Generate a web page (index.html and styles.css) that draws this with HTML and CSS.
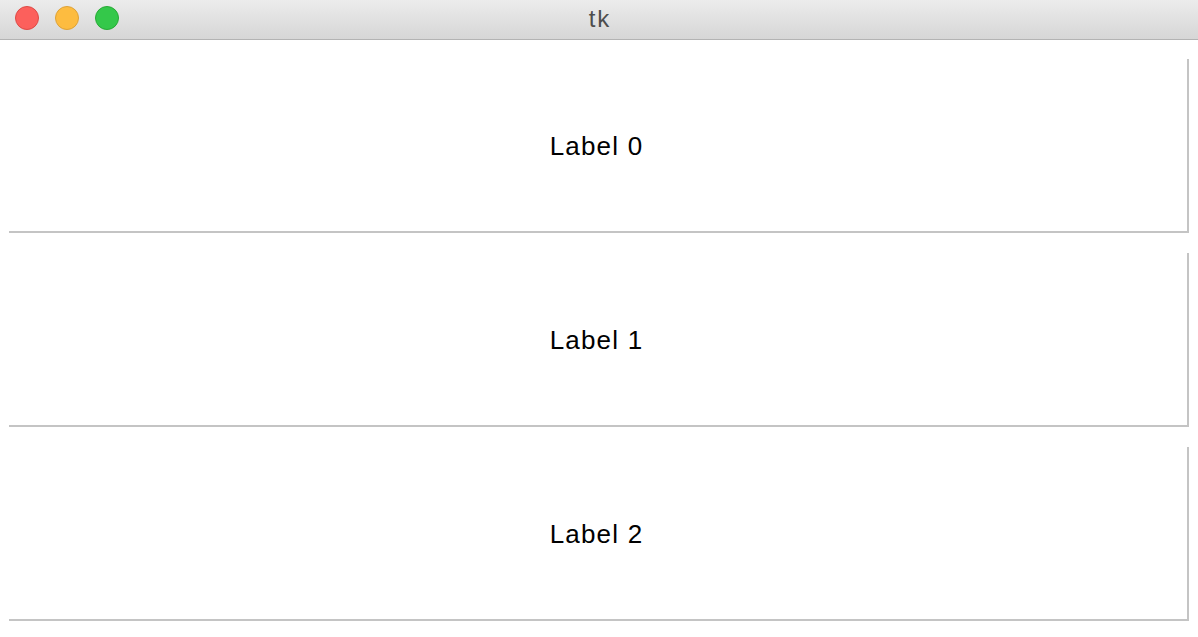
FILE: index.html
```html
<!DOCTYPE html>
<html>
<head>
<meta charset="utf-8">
<title>tk</title>
<link rel="stylesheet" href="styles.css">
</head>
<body>
<div class="window">
  <div class="titlebar">
    <div class="lights">
      <span class="light red"></span>
      <span class="light yellow"></span>
      <span class="light green"></span>
    </div>
    <div class="title">tk</div>
  </div>
  <div class="content">
    <div class="label"><span class="text">Label 0</span></div>
    <div class="label"><span class="text">Label 1</span></div>
    <div class="label"><span class="text">Label 2</span></div>
  </div>
</div>
</body>
</html>
```

FILE: styles.css
```css
html, body {
  margin: 0;
  padding: 0;
  background: #ffffff;
}
.window {
  width: 1198px;
  height: 637px;
  display: flex;
  flex-direction: column;
  background: #ffffff;
  overflow: hidden;
}
.titlebar {
  height: 39px;
  flex: none;
  position: relative;
  background: linear-gradient(#ececec, #d6d6d6);
  border-bottom: 1px solid #b3b3b3;
  display: flex;
  align-items: center;
  justify-content: center;
}
.lights {
  position: absolute;
  left: 15px;
  top: 6px;
  display: flex;
  gap: 16px;
}
.light {
  width: 22px;
  height: 22px;
  border-radius: 50%;
  display: block;
}
.red { background: #fc605c; border: 1px solid #de4a45; }
.yellow { background: #fdbc40; border: 1px solid #dea236; }
.green { background: #34c84a; border: 1px solid #27aa35; }
.title {
  font-family: "Liberation Sans", Arial, sans-serif;
  font-size: 24px;
  letter-spacing: 2px;
  color: #4d4d4d;
  padding-left: 2px;
  padding-bottom: 1px;
}
.content {
  display: flex;
  flex-direction: column;
  gap: 20px;
  padding: 19px 9px 0 9px;
}
.label {
  height: 172px;
  border-right: 2px solid #c4c4c4;
  border-bottom: 2px solid #c4c4c4;
  display: flex;
  align-items: center;
  justify-content: center;
  font-family: "Liberation Sans", Arial, sans-serif;
  font-size: 26px;
  color: #000000;
}
.text {
  letter-spacing: 1.2px;
  padding-right: 3px;
  padding-top: 3px;
}
```
